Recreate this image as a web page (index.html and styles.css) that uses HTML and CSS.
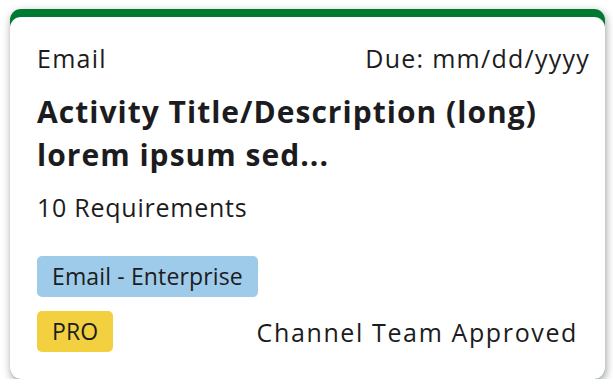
FILE: index.html
```html
<!DOCTYPE html>
<html lang="en">
<head>
  <meta charset="UTF-8" />
  <meta name="viewport" content="width=device-width, initial-scale=1" />
  <title>Activity Card</title>
  <link rel="stylesheet" href="styles.css">
</head>
<body>
  <!-- Activity card -->
  <div class="card">
    <div class="card-body">
      <div class="card-top">
        <span>Email</span>
        <span>Due: mm/dd/yyyy</span>
      </div>
      <h2 class="title">Activity Title/Description (long) lorem ipsum sed...</h2>
      <div class="reqs">10 Requirements</div>
      <div class="tags">
        <span class="tag tag-blue">Email - Enterprise</span>
      </div>
      <div class="card-bottom">
        <span class="tag tag-yellow">PRO</span>
        <span class="approved">Channel Team Approved</span>
      </div>
    </div>
  </div>
</body>
</html>
```

FILE: styles.css
```css
* {
  margin: 0;
  padding: 0;
  box-sizing: border-box;
  font-family: 'Open Sans', sans-serif;
}
body {
  background: #fff;
  color: #1c1c20;
  padding: 9px 9px 0 10px;
}

.card {
  width: 595px;
  padding-top: 8px;
  background: #007a33;
  border-radius: 11px;
  box-shadow: 1px 3px 8px rgba(0, 0, 0, 0.38);
}
.card-body {
  background: #fff;
  border-radius: 11px;
  padding: 27px 15px 27px 27px;
}

.card-top {
  display: flex;
  justify-content: space-between;
  font-size: 25px;
  line-height: 28px;
  letter-spacing: 0.05em;
}

.title {
  margin-top: 18px;
  font-size: 30px;
  line-height: 43px;
  font-weight: 700;
  letter-spacing: 0.034em;
  padding-right: 20px;
}

.reqs {
  margin-top: 17px;
  font-size: 25px;
  line-height: 28px;
  letter-spacing: 0.03em;
}

.tags {
  margin-top: 35px;
  display: flex;
}
.tag {
  display: inline-block;
  font-size: 23px;
  line-height: 41px;
  padding: 0 15px;
  border-radius: 5px;
  letter-spacing: 0.006em;
}
.tag-blue {
  background: #9fcbea;
}
.tag-yellow {
  background: #f3d03f;
}

.card-bottom {
  margin-top: 14px;
  display: flex;
  justify-content: space-between;
  align-items: center;
  padding-right: 12px;
}
.approved {
  font-size: 25px;
  letter-spacing: 0.065em;
}
```
